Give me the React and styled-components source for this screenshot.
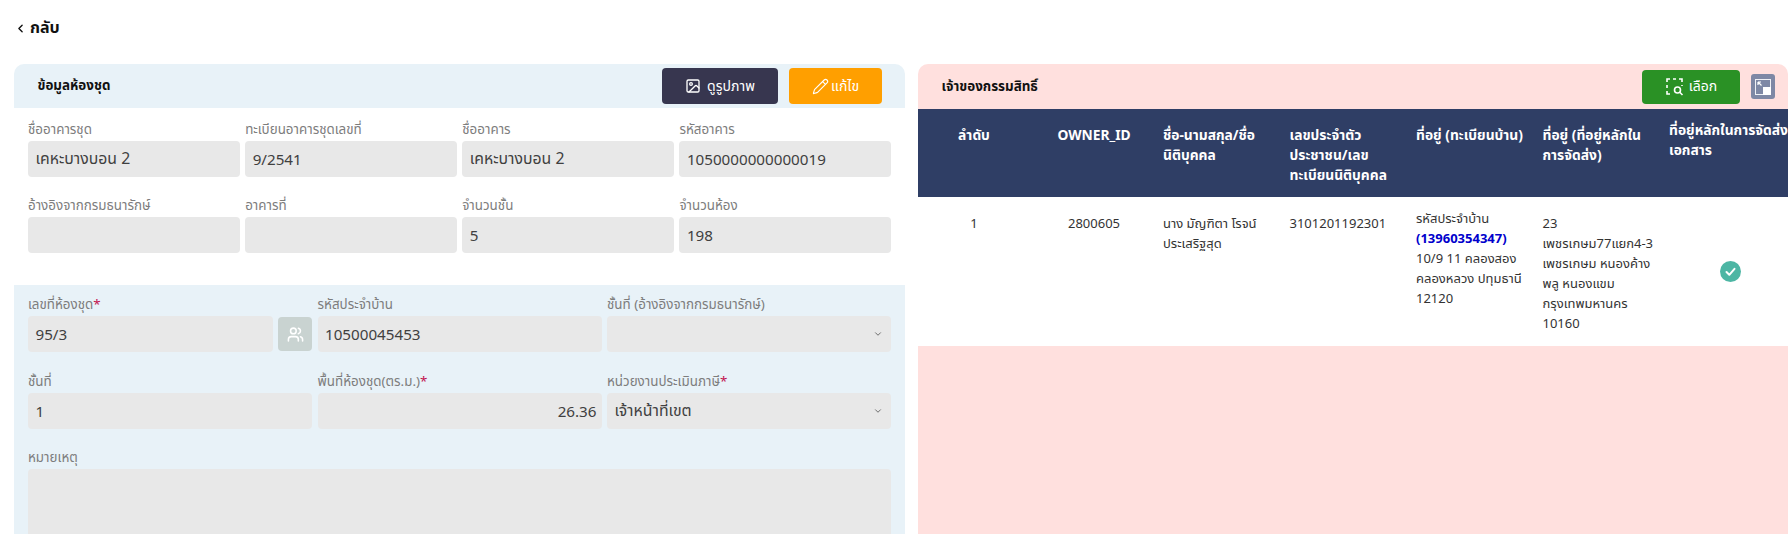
import styled, { createGlobalStyle } from "styled-components";
import { ChevronDown, ChevronLeft, Image, Pencil, Users } from "lucide-react";

const GlobalStyle = createGlobalStyle`
 html, body {
  margin: 0;
  padding: 0;
  background: #fff;
  font-family: "Noto Sans", "Noto Sans Thai", sans-serif;
  color: #333;
 }
 * { box-sizing: border-box; }
`

const Page = styled.div`
 height: 534px;
 overflow: hidden;
 padding-left: 14px;
`
const BackLink = styled.div`
 height: 64px;
 display: flex;
 align-items: center;
 gap: 3px;
 padding-bottom: 8px;
 font-size: 16px;
 font-weight: 700;
 color: #111;
`
const Columns = styled.div`
 display: grid;
 grid-template-columns: 891px 870px;
 gap: 13px;
`
const PanelHeader = styled.div`
 height: ${props => props.$height}px;
 display: flex;
 align-items: center;
 padding: 0 ${props => props.$right}px 0 23.5px;
 gap: 11px;
 background: ${props => props.$bg};
 border-radius: 10px 10px 0 0;
`
const PanelTitle = styled.div`
 flex: 1;
 font-size: 13.4px;
 font-weight: 700;
 color: #111;
`
const ActionButton = styled.div`
 width: ${props => props.$width}px;
 height: ${props => props.$height || 36}px;
 display: flex;
 align-items: center;
 justify-content: center;
 gap: ${props => props.$gap}px;
 border-radius: 4px;
 background: ${props => props.$bg};
 color: #fff;
 font-size: 14px;
`
const ExpandButton = styled.div`
 width: 24px;
 height: 25px;
 display: flex;
 align-items: center;
 justify-content: center;
 border-radius: 3px;
 background: #7e88a5;
`
const InfoGrid = styled.div`
 display: grid;
 grid-template-columns: repeat(4, 1fr);
 gap: 18px 5.5px;
 padding: 11px 14px 32px;
`
const RoomSection = styled.div`
 background: #e8f2f8;
 padding: 9px 14px 0;
 height: 260px;
`
const RoomGrid = styled.div`
 display: grid;
 grid-template-columns: repeat(3, 1fr);
 gap: 18.5px 5.5px;
`
const Field = styled.div`
 grid-column: ${props => props.$full ? "1 / -1" : "auto"};
 min-width: 0;
`
const Label = styled.div`
 height: 22px;
 font-size: 13.4px;
 line-height: 20px;
 color: #7d7d7d;
 white-space: nowrap;
`
const Star = styled.span`
 color: #c2134f;
`
const InputRow = styled.div`
 display: flex;
 gap: 5px;
 align-items: center;
`
const Input = styled.div`
 flex: 1;
 min-width: 0;
 height: ${props => props.$height || 36}px;
 display: flex;
 align-items: center;
 justify-content: ${props => props.$end ? "flex-end" : "space-between"};
 padding: 0 ${props => props.$end ? 5 : 8}px 0 ${props => props.$end ? 5 : 7.5}px;
 background: #e8e8e8;
 border-radius: 4px;
 font-size: ${props => props.$thai ? 15.8 : 15.2}px;
 color: #404040;
`
const PeopleButton = styled.div`
 width: 34px;
 height: 34px;
 flex: none;
 display: flex;
 align-items: center;
 justify-content: center;
 background: #c9d3d1;
 border-radius: 4px;
 color: #fff;
`
const RightBody = styled.div`
 background: #ffe0de;
 height: 425px;
`
const TableRow = styled.div`
 display: grid;
 grid-template-columns: 112px 128px repeat(5, 126.5px);
 height: ${props => props.$height}px;
 background: ${props => props.$head ? "#2f3e65" : "#fff"};
 color: ${props => props.$head ? "#fff" : "#333"};
 font-weight: ${props => props.$head ? 700 : 400};
 font-size: ${props => props.$head ? 13.8 : 13}px;
`
const Cell = styled.div`
 padding: ${props => props.$top ?? 16}px 5px 0;
 line-height: 20px;
 text-align: ${props => props.$center ? "center" : "left"};
 white-space: ${props => props.$nowrap ? "nowrap" : "normal"};
 overflow-wrap: anywhere;
`
const CheckCell = styled.div`
 display: flex;
 align-items: center;
 justify-content: center;
 padding-left: 6px;
`
const HouseCode = styled.span`
 color: #0000cc;
 font-weight: 700;
`

const SelectZone = () => (
 <svg width="20" height="20" viewBox="0 0 20 20" fill="none" stroke="#fff" strokeWidth="1.6">
  <path d="M2 5V2h3M8 2h3M14 2h3v3M17 8v1M2 8v3M2 14v3h3" />
  <circle cx="12.5" cy="13" r="3" />
  <path d="M14.8 15.3l2.7 2.7" />
 </svg>
)

const ExpandIcon = () => (
 <svg width="16" height="16" viewBox="0 0 16 16">
  <rect x="0.5" y="0.5" width="15" height="15" fill="none" stroke="#eef0f5" />
  <rect x="8" y="8" width="8" height="8" fill="#fff" />
  <path d="M3 3l3.5 3.5M3 3h3M3 3v3" stroke="#fff" strokeWidth="1.2" fill="none" />
 </svg>
)

const CheckBadge = () => (
 <svg width="21" height="21" viewBox="0 0 21 21">
  <circle cx="10.5" cy="10.5" r="10.5" fill="#4db6a4" />
  <path d="M6.5 11l2.8 2.8 5.2-6" stroke="#fff" strokeWidth="2" fill="none" strokeLinecap="round" strokeLinejoin="round" />
 </svg>
)

const Arrow = () => <ChevronDown size={10} color="#555" />

const info = [
 { label: "ชื่ออาคารชุด", value: "เคหะบางบอน 2", thai: true },
 { label: "ทะเบียนอาคารชุดเลขที่", value: "9/2541" },
 { label: "ชื่ออาคาร", value: "เคหะบางบอน 2", thai: true },
 { label: "รหัสอาคาร", value: "1050000000000019" },
 { label: "อ้างอิงจากกรมธนารักษ์", value: "" },
 { label: "อาคารที่", value: "" },
 { label: "จำนวนชั้น", value: "5" },
 { label: "จำนวนห้อง", value: "198" },
]

const App = () => {
 return (
  <Page>
   <GlobalStyle />
   <BackLink><ChevronLeft size={13} strokeWidth={2.5} /> กลับ</BackLink>
   <Columns>
    <div>
     <PanelHeader $height={44} $right={23} $bg="#e8f2f8">
      <PanelTitle>ข้อมูลห้องชุด</PanelTitle>
      <ActionButton $width={116} $gap={6} $bg="#37364f"><Image size={16} /> ดูรูปภาพ</ActionButton>
      <ActionButton $width={93} $gap={2} $bg="#ff9f00"><Pencil size={17} strokeWidth={1.6} /> แก้ไข</ActionButton>
     </PanelHeader>
     <InfoGrid>
      {info.map((item) => (
       <Field key={item.label}>
        <Label>{item.label}</Label>
        <Input $thai={item.thai}>{item.value}</Input>
       </Field>
      ))}
     </InfoGrid>
     <RoomSection>
      <RoomGrid>
       <Field>
        <Label>เลขที่ห้องชุด<Star>*</Star></Label>
        <InputRow>
         <Input>95/3</Input>
         <PeopleButton><Users size={17} strokeWidth={2.2} /></PeopleButton>
        </InputRow>
       </Field>
       <Field>
        <Label>รหัสประจำบ้าน</Label>
        <Input>10500045453</Input>
       </Field>
       <Field>
        <Label>ชั้นที่ (อ้างอิงจากกรมธนารักษ์)</Label>
        <Input><span /><Arrow /></Input>
       </Field>
       <Field>
        <Label>ชั้นที่</Label>
        <Input>1</Input>
       </Field>
       <Field>
        <Label>พื้นที่ห้องชุด(ตร.ม.)<Star>*</Star></Label>
        <Input $end>26.36</Input>
       </Field>
       <Field>
        <Label>หน่วยงานประเมินภาษี<Star>*</Star></Label>
        <Input $thai>เจ้าหน้าที่เขต<Arrow /></Input>
       </Field>
       <Field $full>
        <Label>หมายเหตุ</Label>
        <Input $height={120} />
       </Field>
      </RoomGrid>
     </RoomSection>
    </div>
    <div>
     <PanelHeader $height={45} $right={13} $bg="#ffe0de">
      <PanelTitle>เจ้าของกรรมสิทธิ์</PanelTitle>
      <ActionButton $width={98} $height={34} $gap={4} $bg="#2a9125"><SelectZone /> เลือก</ActionButton>
      <ExpandButton><ExpandIcon /></ExpandButton>
     </PanelHeader>
     <RightBody>
      <TableRow $head $height={88}>
       <Cell $center>ลำดับ</Cell>
       <Cell $center>OWNER_ID</Cell>
       <Cell>ชื่อ-นามสกุล/ชื่อนิติบุคคล</Cell>
       <Cell>เลขประจำตัวประชาชน/เลขทะเบียนนิติบุคคล</Cell>
       <Cell>ที่อยู่ (ทะเบียนบ้าน)</Cell>
       <Cell>ที่อยู่ (ที่อยู่หลักใน<br />การจัดส่ง)</Cell>
       <Cell $top={11} $nowrap>ที่อยู่หลักในการจัดส่ง<br />เอกสาร</Cell>
      </TableRow>
      <TableRow $height={149}>
       <Cell $center>1</Cell>
       <Cell $center>2800605</Cell>
       <Cell>นาง มัญฑิตา โรจน์ประเสริฐสุด</Cell>
       <Cell>3101201192301</Cell>
       <Cell $top={11}>รหัสประจำบ้าน <HouseCode>(13960354347)</HouseCode> 10/9 11 คลองสอง คลองหลวง ปทุมธานี 12120</Cell>
       <Cell>23<br />เพชรเกษม77แยก4-3 เพชรเกษม หนองค้างพลู หนองแขม กรุงเทพมหานคร 10160</Cell>
       <CheckCell><CheckBadge /></CheckCell>
      </TableRow>
     </RightBody>
    </div>
   </Columns>
  </Page>
 )
}

export default App
